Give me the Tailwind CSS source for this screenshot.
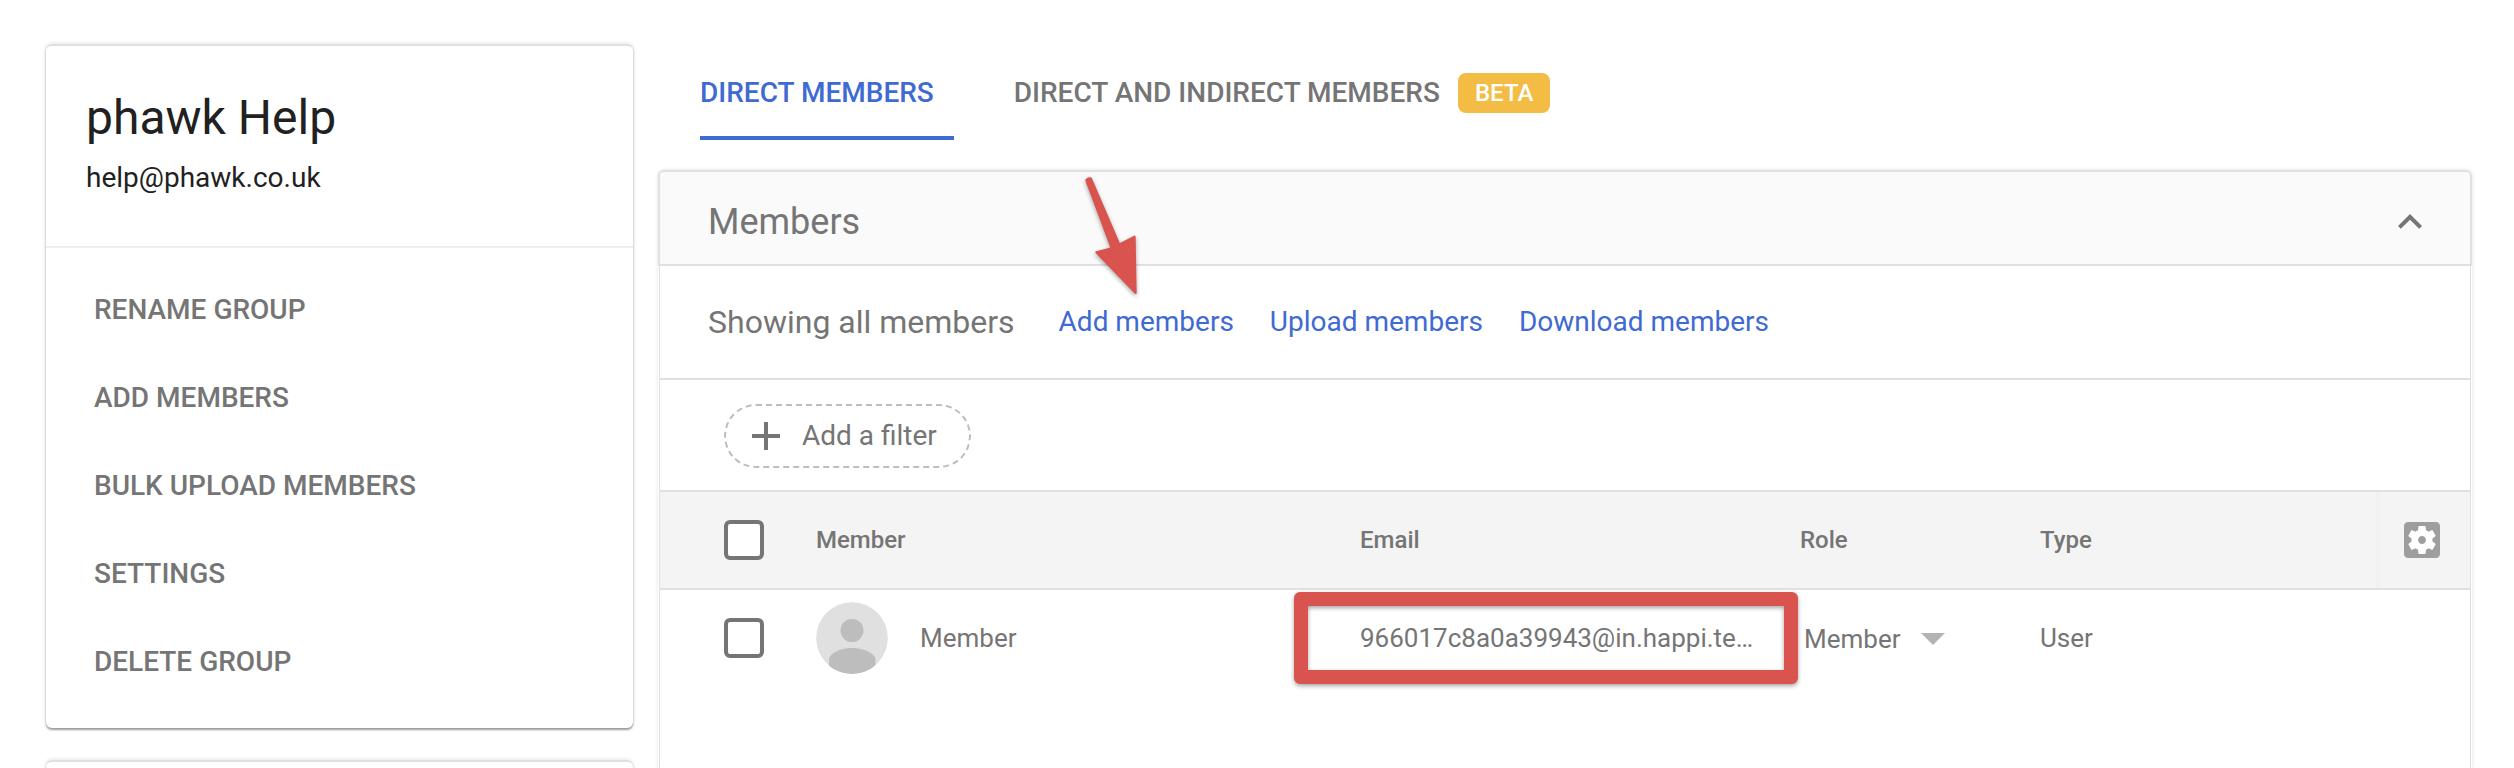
<!DOCTYPE html>
<html lang="en">
<head>
<meta charset="utf-8">
<meta name="viewport" content="width=device-width, initial-scale=1">
<title>phawk Help – Members</title>
<script src="https://cdn.jsdelivr.net/npm/@tailwindcss/browser@4"></script>
</head>
<body class="bg-white font-['Roboto',sans-serif] text-[#757575]">
<div class="flex h-screen gap-[25px] overflow-hidden pl-[46px] pr-[42px] pt-11">

  <aside class="flex w-[587px] shrink-0 flex-col gap-8">
    <section class="rounded-md border-t-2 border-[#e0e0e0] bg-white pb-[22px] shadow-[0_2px_2px_rgba(0,0,0,0.35),0_0_4px_rgba(0,0,0,0.15)]">
      <header class="border-b-2 border-[#eeeeee] px-10 pb-[50px] pt-11 text-[#212121]">
        <h1 class="text-[48px] leading-[56px]">phawk Help</h1>
        <p class="mt-3.5 text-[28px] leading-9">help@phawk.co.uk</p>
      </header>
      <nav class="flex flex-col items-start px-12 pt-[18px] text-[28px] font-medium leading-[88px]">
        <button type="button">RENAME GROUP</button>
        <button type="button">ADD MEMBERS</button>
        <button type="button">BULK UPLOAD MEMBERS</button>
        <button type="button">SETTINGS</button>
        <button type="button">DELETE GROUP</button>
      </nav>
    </section>
    <section class="flex-1 rounded-t-md border-t-2 border-[#e0e0e0] bg-white shadow-[0_2px_2px_rgba(0,0,0,0.35),0_0_4px_rgba(0,0,0,0.15)]"></section>
  </aside>

  <main class="flex min-w-0 flex-1 flex-col">
    <div role="tablist" class="mb-[30px] flex gap-[60px] pl-[42px] pt-2 text-[28px] font-medium">
      <button type="button" role="tab" aria-selected="true" class="flex h-[88px] items-center border-b-4 border-[#3f6ad2] pb-0.5 pr-5 text-[#3f6ad2]">DIRECT MEMBERS</button>
      <button type="button" role="tab" aria-selected="false" class="flex h-[88px] items-center gap-[18px] pb-1.5">DIRECT AND INDIRECT MEMBERS
        <span class="flex h-10 items-center rounded-lg bg-[#f3bc44] px-[17px] text-2xl font-medium text-white">BETA</span>
      </button>
    </div>

    <section class="relative flex flex-1 flex-col rounded-t-md shadow-[0_0_4px_rgba(0,0,0,0.12)]">
      <header class="flex h-24 items-center justify-between rounded-t-md border-2 border-[#e0e0e0] bg-[#fafafa] pl-12 pr-9 pt-2">
        <h2 class="text-[36px] leading-[44px]">Members</h2>
        <button type="button" aria-label="Collapse">
          <svg class="size-12" viewBox="0 0 24 24" fill="currentColor"><path d="M12 8l-6 6 1.41 1.41L12 10.83l4.59 4.58L18 14z"/></svg>
        </button>
      </header>

      <div class="mx-px flex-1 border-x border-[#e0e0e0] bg-white">
        <div class="flex h-[114px] items-center border-b-2 border-[#e0e0e0] pl-12">
          <p class="mr-11 text-[32px]">Showing all members</p>
          <div class="flex gap-9 text-[28px] text-[#3f6ad2]">
            <a href="#add">Add members</a>
            <a href="#upload">Upload members</a>
            <a href="#download">Download members</a>
          </div>
        </div>

        <div class="flex h-28 items-center border-b-2 border-[#e0e0e0] pl-16 pt-0.5">
          <button type="button" class="flex h-16 items-center gap-[22px] rounded-full border-2 border-dashed border-[#bdbdbd] pl-[26px] pr-8 text-[28px]">
            <svg class="size-7" viewBox="0 0 28 28" fill="none" stroke="currentColor" stroke-width="4"><path d="M14 0v28M0 14h28"/></svg>
            Add a filter
          </button>
        </div>

        <table class="w-full table-fixed border-separate border-spacing-0 text-left text-[26px]">
          <colgroup>
            <col class="w-[156px]"><col class="w-[544px]"><col class="w-[440px]"><col class="w-[240px]"><col><col class="w-[94px]">
          </colgroup>
          <thead class="bg-[#f4f4f4] text-2xl">
            <tr class="h-[98px]">
              <th class="border-b-2 border-[#e0e0e0] p-0 pl-16"><input type="checkbox" aria-label="Select all members" class="block size-10 appearance-none rounded-md border-4 border-[#757575] bg-white"></th>
              <th class="border-b-2 border-[#e0e0e0] p-0 font-medium">Member</th>
              <th class="border-b-2 border-[#e0e0e0] p-0 font-medium">Email</th>
              <th class="border-b-2 border-[#e0e0e0] p-0 font-medium">Role</th>
              <th class="border-b-2 border-[#e0e0e0] p-0 font-medium">Type</th>
              <th class="border-b-2 border-[#e0e0e0] p-0">
                <div class="flex h-24 items-center border-l-4 border-[#f2f2f2] pl-[18px]">
                  <button type="button" aria-label="Manage columns">
                    <svg class="block size-12" viewBox="0 0 24 24"><path fill="#fff" d="M5 5h14v14H5z"/><path fill="#9e9e9e" d="M12 10c-1.1 0-2 .9-2 2s.9 2 2 2 2-.9 2-2-.9-2-2-2zm7-7H5c-1.11 0-2 .9-2 2v14c0 1.1.89 2 2 2h14c1.11 0 2-.9 2-2V5c0-1.1-.89-2-2-2zm-1.75 9c0 .23-.02.46-.05.68l1.48 1.16c.13.11.17.3.08.45l-1.4 2.42c-.09.15-.27.21-.43.15l-1.74-.7c-.36.28-.76.51-1.18.69l-.26 1.85c-.03.17-.18.3-.35.3h-2.8c-.17 0-.32-.13-.35-.29l-.26-1.85c-.43-.18-.82-.41-1.18-.69l-1.74.7c-.16.06-.34 0-.43-.15l-1.4-2.42c-.09-.15-.05-.34.08-.45l1.48-1.16c-.03-.23-.05-.46-.05-.69s.02-.46.05-.68l-1.48-1.16c-.13-.11-.17-.3-.08-.45l1.4-2.42c.09-.15.27-.21.43-.15l1.74.7c.36-.28.76-.51 1.18-.69l.26-1.85c.03-.17.18-.3.35-.3h2.8c.17 0 .32.13.35.29l.26 1.85c.43.18.82.41 1.18.69l1.74-.7c.16-.06.34 0 .43.15l1.4 2.42c.09.15.05.34-.08.45l-1.48 1.16c.03.23.05.46.05.69z"/></svg>
                  </button>
                </div>
              </th>
            </tr>
          </thead>
          <tbody>
            <tr class="h-24">
              <td class="p-0 pl-16"><input type="checkbox" aria-label="Select member" class="block size-10 appearance-none rounded-md border-4 border-[#757575] bg-white"></td>
              <td class="p-0">
                <div class="flex items-center gap-8">
                  <svg class="size-[72px] rounded-full" viewBox="0 0 72 72"><circle cx="36" cy="36" r="36" fill="#e0e0e0"/><circle cx="36" cy="28.5" r="11.5" fill="#bdbdbd"/><path fill="#bdbdbd" d="M13 72V58c0-7 12-12 23-12s23.500 5 23.500 12v14z"/></svg>
                  <span>Member</span>
                </div>
              </td>
              <td class="relative p-0">966017c8a0a39943@in.happi.te…
                <div class="pointer-events-none absolute -left-[66px] right-0.5 top-0.5 h-[92px] rounded-md border-[14px] border-[#d9534f] drop-shadow-[0_2px_2px_rgba(0,0,0,0.35)]"></div>
              </td>
              <td class="p-0 pl-1 pt-0.5">
                <div class="relative inline-block">
                  <select aria-label="Role" class="block appearance-none bg-transparent pr-12">
                    <option>Member</option>
                  </select>
                  <svg class="pointer-events-none absolute right-1 top-1/2 h-3 w-6 -translate-y-1/2" viewBox="0 0 24 12"><path d="M0 0h24L12 12z" fill="#b3b3b3"/></svg>
                </div>
              </td>
              <td class="p-0">User</td>
              <td class="p-0"></td>
            </tr>
          </tbody>
        </table>
      </div>

      <svg class="pointer-events-none absolute -top-5 left-[382px] h-40 w-[140px] drop-shadow-[0_2px_2px_rgba(0,0,0,0.35)]" viewBox="0 0 420 480"><path fill="#d9534f" stroke="#d9534f" stroke-width="6" stroke-linejoin="round" d="M139 91Q138 88 149 85Q153 84 154 88L238 283L284 260L287 429L169 307L215 295Z"/></svg>
    </section>
  </main>
</div>
</body>
</html>
